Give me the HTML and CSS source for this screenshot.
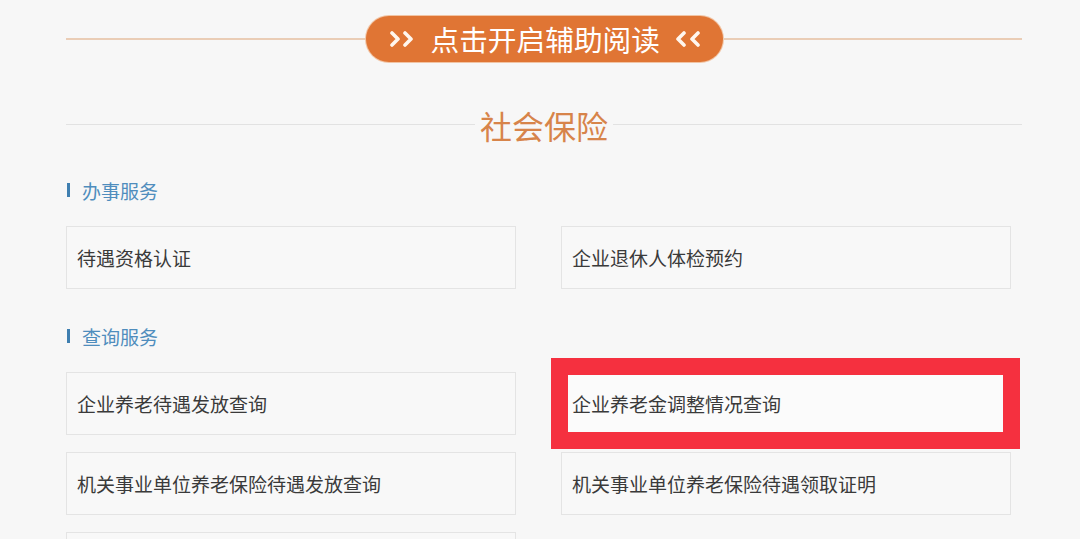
FILE: index.html
```html
<!DOCTYPE html>
<html lang="zh-CN">
  <head>
    <meta charset="utf-8" />
    <meta name="viewport" content="width=device-width, initial-scale=1" />
    <title>社会保险</title>
    <link rel="stylesheet" href="styles.css">
  </head>
  <body>
    <div class="page">
      <div class="topbar">
        <span class="topline"></span>
        <button class="assist">
          <svg class="chev" width="26" height="16" viewBox="0 0 26 16">
            <polyline points="3,2 9,8 3,14" />
            <polyline points="16,2 22,8 16,14" />
          </svg>
          <span class="assist-text">点击开启辅助阅读</span>
          <svg class="chev" width="28" height="16" viewBox="0 0 28 16">
            <polyline points="10,2 4,8 10,14" />
            <polyline points="24,2 18,8 24,14" />
          </svg>
        </button>
        <span class="topline"></span>
      </div>

      <div class="title-row">
        <span class="title-line"></span>
        <h1>社会保险</h1>
        <span class="title-line"></span>
      </div>

      <h2 class="section">办事服务</h2>
      <div class="cards">
        <div class="card">待遇资格认证</div>
        <div class="card">企业退休人体检预约</div>
      </div>

      <h2 class="section">查询服务</h2>
      <div class="cards">
        <div class="card">企业养老待遇发放查询</div>
        <div class="card marked">企业养老金调整情况查询<span class="mark"></span></div>
        <div class="card">机关事业单位养老保险待遇发放查询</div>
        <div class="card">机关事业单位养老保险待遇领取证明</div>
        <div class="card"></div>
      </div>
    </div>
  </body>
</html>
```

FILE: styles.css
```css
body {
  margin: 0;
  background: #f7f7f7;
  font-family: "Noto Sans CJK SC", "Noto Sans", sans-serif;
}
.page {
  width: 956px;
  margin-left: 66px;
  padding-top: 16px;
}
.topbar {
  display: flex;
  align-items: center;
}
.topline {
  flex: 1;
  height: 2px;
  background: #eacdb6;
}
.assist {
  display: flex;
  align-items: center;
  height: 46px;
  width: 357px;
  padding: 0 19px 0 23px;
  border: none;
  border-radius: 23px;
  background: #e07534;
  color: #fff;
  font-family: inherit;
  box-shadow: 0 0 0 1px #f1c4a4;
}
.chev polyline {
  fill: none;
  stroke: #fff6ee;
  stroke-width: 3.6;
  stroke-linecap: round;
  stroke-linejoin: round;
}
.assist-text {
  font-size: 28.7px;
  line-height: 46px;
  margin: 0 14px 0 16px;
  white-space: nowrap;
}
.title-row {
  display: flex;
  align-items: center;
  margin-top: 43px;
  height: 40px;
}
.title-line {
  flex: 1;
  height: 1px;
  background: #e2e2e2;
  margin-top: -2px;
}
.title-row h1 {
  margin: 0 5px;
  font-size: 32px;
  font-weight: normal;
  line-height: 40px;
  color: #d7844a;
}
.section {
  display: flex;
  align-items: center;
  margin: 33px 0 0;
  height: 24px;
  font-size: 19px;
  font-weight: normal;
  color: #4f8dbd;
}
.section::before {
  content: "";
  width: 3px;
  height: 14px;
  margin: 0 12px 0 1px;
  background: #3f7fb0;
}
.section + .cards {
  margin-top: 24px;
}
.cards + .section {
  margin-top: 35px;
}
.cards {
  display: grid;
  grid-template-columns: 450px 450px;
  column-gap: 45px;
  row-gap: 17px;
}
.card {
  position: relative;
  box-sizing: border-box;
  height: 63px;
  padding-left: 10px;
  border: 1px solid #e4e4e4;
  background: #f8f8f8;
  font-size: 19px;
  line-height: 61px;
  color: #3a3a3a;
}
.marked {
  background: #fbfbfb;
}
.mark {
  position: absolute;
  left: -11px;
  top: -15px;
  width: 469px;
  height: 91px;
  box-sizing: border-box;
  border: 17px solid #f5303f;
}
```
